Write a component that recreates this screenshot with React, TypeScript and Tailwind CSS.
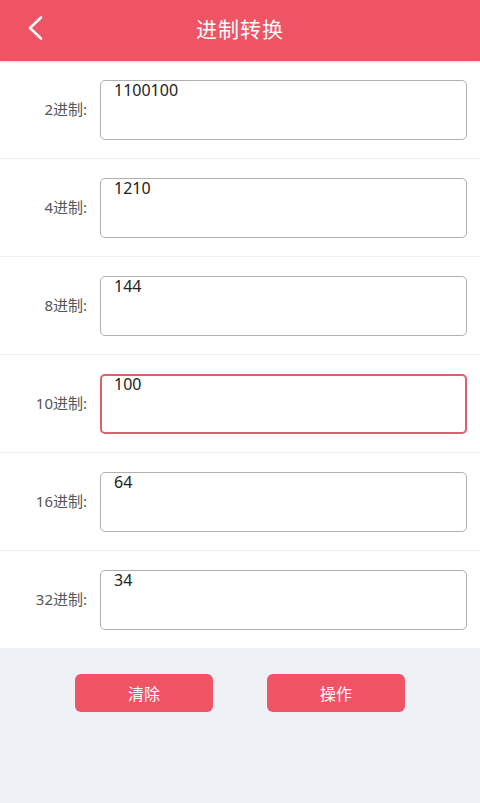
import { useState } from "react";

const rows = [
  { label: "2进制:", value: "1100100" },
  { label: "4进制:", value: "1210" },
  { label: "8进制:", value: "144" },
  { label: "10进制:", value: "100", focused: true },
  { label: "16进制:", value: "64" },
  { label: "32进制:", value: "34" },
];

export default function App() {
  const [values, setValues] = useState(rows.map((r) => r.value));

  return (
    <div
      className="flex flex-col w-[480px] h-[803px] bg-[#edf1f6] overflow-hidden"
      style={{ fontFamily: '"Noto Sans", "Noto Sans CJK SC", sans-serif' }}
    >
      <div className="relative flex items-center justify-center h-[61px] pb-[4px] bg-[#ee5464] shadow-[0_1px_2px_rgba(0,0,0,0.15)]">
        <svg
          className="absolute left-[26px] top-[15px]"
          width="20"
          height="26"
          viewBox="0 0 20 26"
          fill="none"
        >
          <path
            d="M15 2.5 L4 13 L15 23.5"
            stroke="#fff"
            strokeWidth="2.6"
            strokeLinecap="round"
            strokeLinejoin="round"
          />
        </svg>
        <span className="text-white text-[21px] tracking-[1px] font-['Noto_Sans_CJK_SC',sans-serif]">
          进制转换
        </span>
      </div>

      <div className="flex flex-col bg-white">
        {rows.map((row, i) => (
          <div
            key={row.label}
            className="flex items-center h-[98px] border-b border-[#f1f1f1]"
          >
            <div className="w-[100px] pr-[13px] text-right text-[15px] text-[#555]">
              {row.label}
            </div>
            <textarea
              value={values[i]}
              onChange={(e) => {
                const next = [...values];
                next[i] = e.target.value;
                setValues(next);
              }}
              className={
                row.focused
                  ? "w-[367px] h-[60px] resize-none rounded-[5px] border-2 border-[#d9606d] pl-[12px] pt-0 text-[16px] leading-[17px] text-[#222] outline-none"
                  : "w-[367px] h-[60px] resize-none rounded-[5px] border border-[#b0b0b0] pl-[13px] pt-0 text-[16px] leading-[18px] text-[#222] outline-none"
              }
            />
          </div>
        ))}
      </div>

      <div className="flex justify-center gap-[54px] pt-[25px]">
        <button className="w-[138px] h-[38px] rounded-[6px] bg-[#ee5464] text-white text-[16px] font-['Noto_Sans_CJK_SC',sans-serif]">
          清除
        </button>
        <button className="w-[138px] h-[38px] rounded-[6px] bg-[#ee5464] text-white text-[16px] font-['Noto_Sans_CJK_SC',sans-serif]">
          操作
        </button>
      </div>
    </div>
  );
}
